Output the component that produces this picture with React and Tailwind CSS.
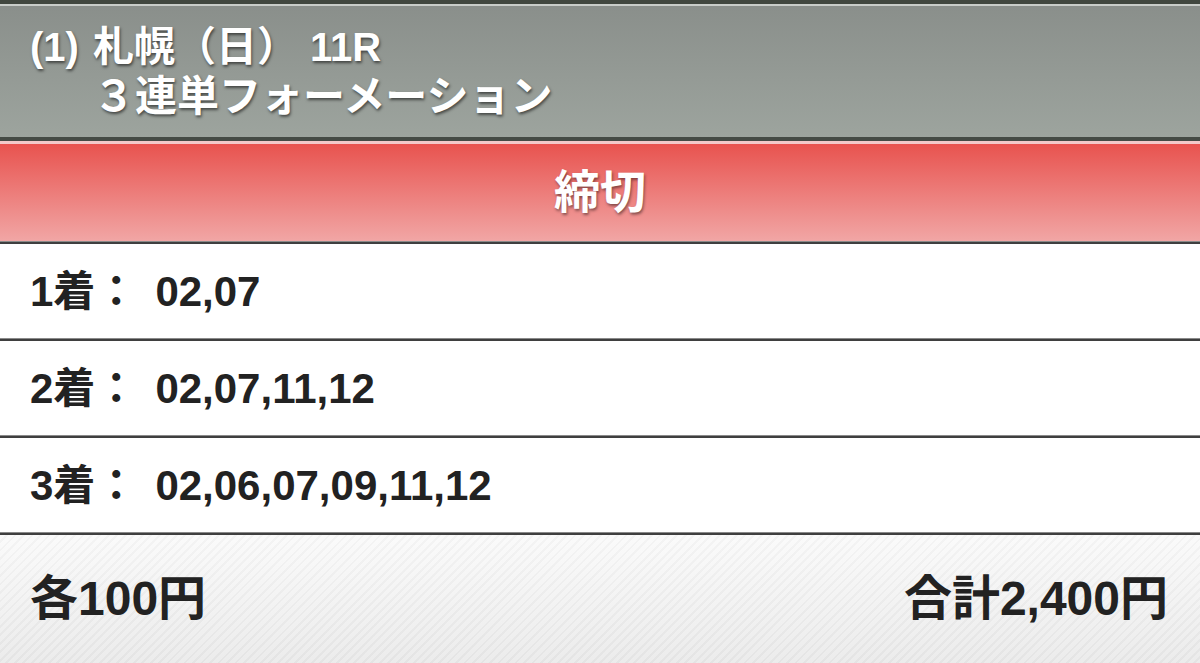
import React from 'react'

const rows = [
  { label: '1着', value: '02,07' },
  { label: '2着', value: '02,07,11,12' },
  { label: '3着', value: '02,06,07,09,11,12' },
]

function Divider() {
  return (
    <div className="flex flex-col">
      <div className="h-[1px] bg-[#8a8a8a]" />
      <div className="h-[2px] bg-[#3f3f3f]" />
    </div>
  )
}

export default function App() {
  return (
    <div className="w-[1200px] h-[663px] overflow-hidden flex flex-col bg-white font-['Liberation_Sans','Noto_Sans_CJK_JP',sans-serif] font-bold">
      {/* top edge */}
      <div className="h-[4px] bg-[#41473f]" />
      <div className="h-[2px] bg-[#c9cdc9]" />

      {/* race header */}
      <div className="h-[131px] pt-[16px] pl-[30px] bg-[linear-gradient(to_bottom,#8a8f8b,#9da49e)] text-white [text-shadow:1px_2px_3px_rgba(0,0,0,0.55)]">
        <div className="flex text-[40px] leading-[50px]">
          <span>(1)</span>
          <span className="ml-[14px] text-[41px]">札幌（日）</span>
          <span className="ml-[12px]">11R</span>
        </div>
        <div className="text-[42px] leading-[50px] ml-[63px]">３連単フォーメーション</div>
      </div>

      <div className="h-[4px] bg-[#454b45]" />
      <div className="h-[3px] bg-[#f3c9c9]" />

      {/* status */}
      <div className="h-[97px] flex items-center justify-center bg-[linear-gradient(to_bottom,#e8534f,#f1a6a5)] text-white text-[46px] [text-shadow:1px_2px_3px_rgba(0,0,0,0.45)]">
        締切
      </div>

      <Divider />

      {rows.map((r) => (
        <React.Fragment key={r.label}>
          <div className="h-[94px] flex items-center pl-[30px] text-[#222] text-[42px]">
            <span>{r.label}：</span>
            <span className="ml-[18px]">{r.value}</span>
          </div>
          <Divider />
        </React.Fragment>
      ))}

      {/* totals */}
      <div className="flex-1 flex items-center justify-between pl-[30px] pr-[32px] text-[#222] text-[48px] bg-[linear-gradient(to_bottom,rgba(255,255,255,0.5),rgba(220,220,220,0.4)),repeating-linear-gradient(135deg,#f6f6f6_0px,#f6f6f6_4px,#e9e9e9_4px,#e9e9e9_6px)]">
        <span>各100円</span>
        <span>合計2,400円</span>
      </div>
    </div>
  )
}
